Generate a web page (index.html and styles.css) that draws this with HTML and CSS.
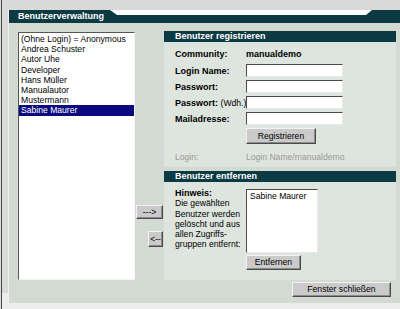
FILE: index.html
```html
<!DOCTYPE html>
<html lang="de">
<head>
  <meta charset="UTF-8">
  <title>Benutzerverwaltung</title>
  <link rel="stylesheet" href="styles.css">
</head>
<body>

<div class="frame">
  <div class="win">
    <div class="titlebar">
      <div class="tab-left">Benutzerverwaltung</div>
      <div class="notch"><div class="notch-top"></div></div>
      <div class="tab-right"></div>
    </div>

    <div class="main">
      <div class="userlist">
        <div class="item">(Ohne Login) = Anonymous</div>
        <div class="item">Andrea Schuster</div>
        <div class="item">Autor Uhe</div>
        <div class="item">Developer</div>
        <div class="item">Hans Müller</div>
        <div class="item">Manualautor</div>
        <div class="item">Mustermann</div>
        <div class="item selected">Sabine Maurer</div>
      </div>

      <div class="arrows">
        <div class="btn btn-move">---&gt;</div>
        <div class="btn btn-back">&lt;--</div>
      </div>

      <div class="right">
        <div class="panel panel-reg">
          <div class="panel-head">Benutzer registrieren</div>
          <div class="reg-grid">
            <div class="lbl row-top">Community:</div>
            <div class="lbl row-top">manualdemo</div>
            <div class="lbl">Login Name:</div>
            <div class="field"></div>
            <div class="lbl">Passwort:</div>
            <div class="field"></div>
            <div class="lbl nowrap">Passwort: <span class="normal">(Wdh.)</span></div>
            <div class="field"></div>
            <div class="lbl">Mailadresse:</div>
            <div class="field"></div>
            <div></div>
            <div class="btn btn-reg">Registrieren</div>
            <div class="muted row-login">Login:</div>
            <div class="muted row-login">Login Name/manualdemo</div>
          </div>
        </div>

        <div class="panel panel-del">
          <div class="panel-head">Benutzer entfernen</div>
          <div class="del-body">
            <div class="hint">
              <strong>Hinweis:</strong><br>
              Die gewählten<br>
              Benutzer werden<br>
              gelöscht und aus<br>
              allen Zugriffs-<br>
              gruppen entfernt:
            </div>
            <div class="del-side">
              <div class="dellist">
                <div class="item">Sabine Maurer</div>
              </div>
              <div class="btn btn-del">Entfernen</div>
            </div>
          </div>
        </div>

        <div class="footer">
          <div class="btn btn-close">Fenster schließen</div>
        </div>
      </div>
    </div>
  </div>
</div>

</body>
</html>
```

FILE: styles.css
```css
body {
  margin: 0;
  font-family: "Liberation Sans", Arial, sans-serif;
  font-size: 8.6px;
  color: #000;
  background: #d9d9d9;
}

.frame {
  height: 309px;
  box-sizing: border-box;
  margin-left: 1px;
  border-left: 1px solid #4a4a4a;
  padding: 10px 0 6px 6px;
  background: linear-gradient(to bottom, #d9d9d9 0, #d9d9d9 293px, #ededed 293px);
}

.win {
  height: 293px;
  background: #d2dad2;
  border-left: 1px solid #eef0ee;
}

/* Kopfzeile */
.titlebar {
  display: flex;
  height: 13px;
}

.tab-left {
  width: 92px;
  padding-left: 9px;
  background: #0c3a43;
  color: #fff;
  font-weight: bold;
  font-size: 9px;
  line-height: 13px;
  white-space: nowrap;
}

.notch {
  flex: 1;
  background: #0c3a43;
}

.notch-top {
  height: 5px;
  background: #fff;
  clip-path: polygon(0 0, 100% 0, calc(100% - 6px) 100%, 7px 100%);
}

.tab-right {
  width: 28px;
  background: #0c3a43;
}

.main {
  display: flex;
  padding: 8px 0 0 9px;
}

/* Benutzerliste */
.userlist {
  width: 115px;
  height: 245px;
  margin-top: 1px;
  padding-top: 1px;
  background: #fff;
  border: 1px solid;
  border-color: #555 #f4f4f4 #f4f4f4 #555;
}

.item {
  line-height: 10.2px;
  height: 10.2px;
  padding-left: 2px;
  white-space: nowrap;
}

.item.selected {
  background: #0a0a7e;
  color: #fff;
}

.arrows {
  width: 29px;
  display: flex;
  flex-direction: column;
  align-items: flex-end;
  padding-top: 174px;
  padding-right: 1px;
  box-sizing: border-box;
  gap: 12px;
}

.btn {
  background: #cacaca;
  border: 1px solid;
  border-color: #f2f2f2 #4a4a4a #4a4a4a #f2f2f2;
  box-shadow: inset -1px -1px 0 #8c8c8c;
  box-sizing: border-box;
  text-align: center;
  white-space: nowrap;
}

.btn-move {
  width: 27px;
  height: 14px;
  line-height: 12px;
}

.btn-back {
  width: 15px;
  height: 16px;
  line-height: 14px;
}

.right {
  width: 232px;
}

.panel {
  background: #dee4de;
}

.panel-head {
  height: 11px;
  line-height: 11px;
  padding-left: 11px;
  background: #0c3a43;
  color: #fff;
  font-weight: bold;
  font-size: 9px;
}

.panel-reg {
  height: 136px;
}

.reg-grid {
  display: grid;
  grid-template-columns: 71px 97px;
  grid-template-rows: 14px 13px 13px 13px 13px 16px 14px;
  row-gap: 3px;
  padding: 5px 0 0 11px;
  align-items: center;
}

.lbl {
  font-weight: bold;
  font-size: 9px;
}

.normal {
  font-weight: normal;
  font-size: 8.6px;
}

.nowrap {
  white-space: nowrap;
}

.field {
  height: 13px;
  background: #fff;
  border: 1px solid;
  border-color: #4a4a4a #e8e8e8 #e8e8e8 #4a4a4a;
  box-sizing: border-box;
}

.btn-reg {
  width: 70px;
  height: 16px;
  line-height: 14px;
}

.row-login {
  margin-top: 6px;
}

.muted {
  color: #9a9a9a;
  white-space: nowrap;
}

.panel-del {
  height: 109px;
  margin-top: 4px;
}

.del-body {
  display: flex;
  padding: 7px 0 0 11px;
}

.hint {
  width: 71px;
  margin-top: -1px;
  line-height: 10.3px;
  white-space: nowrap;
}

.hint strong {
  font-size: 9px;
}

.dellist {
  width: 72px;
  height: 64px;
  box-sizing: border-box;
  padding-top: 1px;
  background: #fff;
  border: 1px solid;
  border-color: #4a4a4a #e8e8e8 #e8e8e8 #4a4a4a;
}

.dellist .item {
  padding-left: 3px;
}

.btn-del {
  width: 55px;
  height: 15px;
  line-height: 13px;
  margin-top: 2px;
}

.footer {
  display: flex;
  justify-content: flex-end;
  padding: 2px 5px 0 0;
}

.btn-close {
  width: 99px;
  height: 15px;
  line-height: 13px;
}
```
